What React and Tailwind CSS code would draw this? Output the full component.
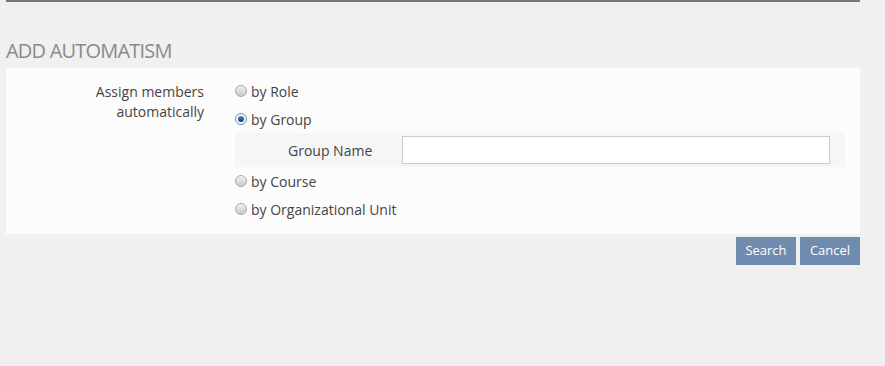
import React, { useState } from 'react';

const options = [
  { id: 'role', label: 'by Role' },
  { id: 'group', label: 'by Group' },
  { id: 'course', label: 'by Course' },
  { id: 'orgu', label: 'by Organizational Unit' },
];

const Radio = ({ checked }) => (
  <span
    className={`inline-flex items-center justify-center w-[12px] h-[12px] rounded-full border ${
      checked ? 'border-[#7a8ea6] bg-[#f4f6f8]' : 'border-[#a9a9a9] bg-gradient-to-b from-[#f2f2f2] to-[#c9c9c9]'
    }`}
  >
    {checked && <span className="w-[6px] h-[6px] rounded-full bg-gradient-to-b from-[#4a90c8] to-[#0b3b6e]" />}
  </span>
);

const App = () => {
  const [value, setValue] = useState('group');

  return (
    <div className="w-[885px] h-[366px] bg-[#f0f0f0] px-[6px] text-[#444] font-['Open_Sans',sans-serif]">
      <div className="w-[854px]">
        <div className="h-[2px] bg-[#777]" />
        <h2 className="mt-[37px] text-[20px] leading-[24px] text-[#8a8a8a] font-normal tracking-[-0.8px]">ADD AUTOMATISM</h2>
        <div className="mt-[5px] bg-[#fcfcfc] flex pt-[9px] pb-[11px]">
          <div className="w-[214px] pr-[16px] pt-[5px] text-right text-[14px] leading-[20px]">
            Assign members
            <br />
            automatically
          </div>
          <div className="ml-[15px] flex-1 pr-[15px] text-[14px]">
            {options.map((o) => (
              <React.Fragment key={o.id}>
                <label
                  className="h-[28px] flex items-center gap-[4px] cursor-pointer"
                  onClick={() => setValue(o.id)}
                >
                  <Radio checked={value === o.id} />
                  <span>{o.label}</span>
                </label>
                {o.id === 'group' && value === 'group' && (
                  <div className="h-[34px] bg-[#f6f6f6] flex items-center pr-[15px]">
                    <span className="pl-[53px] w-[167px]">Group Name</span>
                    <input
                      type="text"
                      className="flex-1 h-[28px] bg-white border border-[#cccccc] outline-none px-2"
                    />
                  </div>
                )}
              </React.Fragment>
            ))}
          </div>
        </div>
        <div className="mt-[3px] flex justify-end gap-[4px]">
          <button className="w-[60px] h-[28px] bg-[#6f8bae] text-white text-[13px]">Search</button>
          <button className="w-[60px] h-[28px] bg-[#6f8bae] text-white text-[13px]">Cancel</button>
        </div>
      </div>
    </div>
  );
};

export default App;
